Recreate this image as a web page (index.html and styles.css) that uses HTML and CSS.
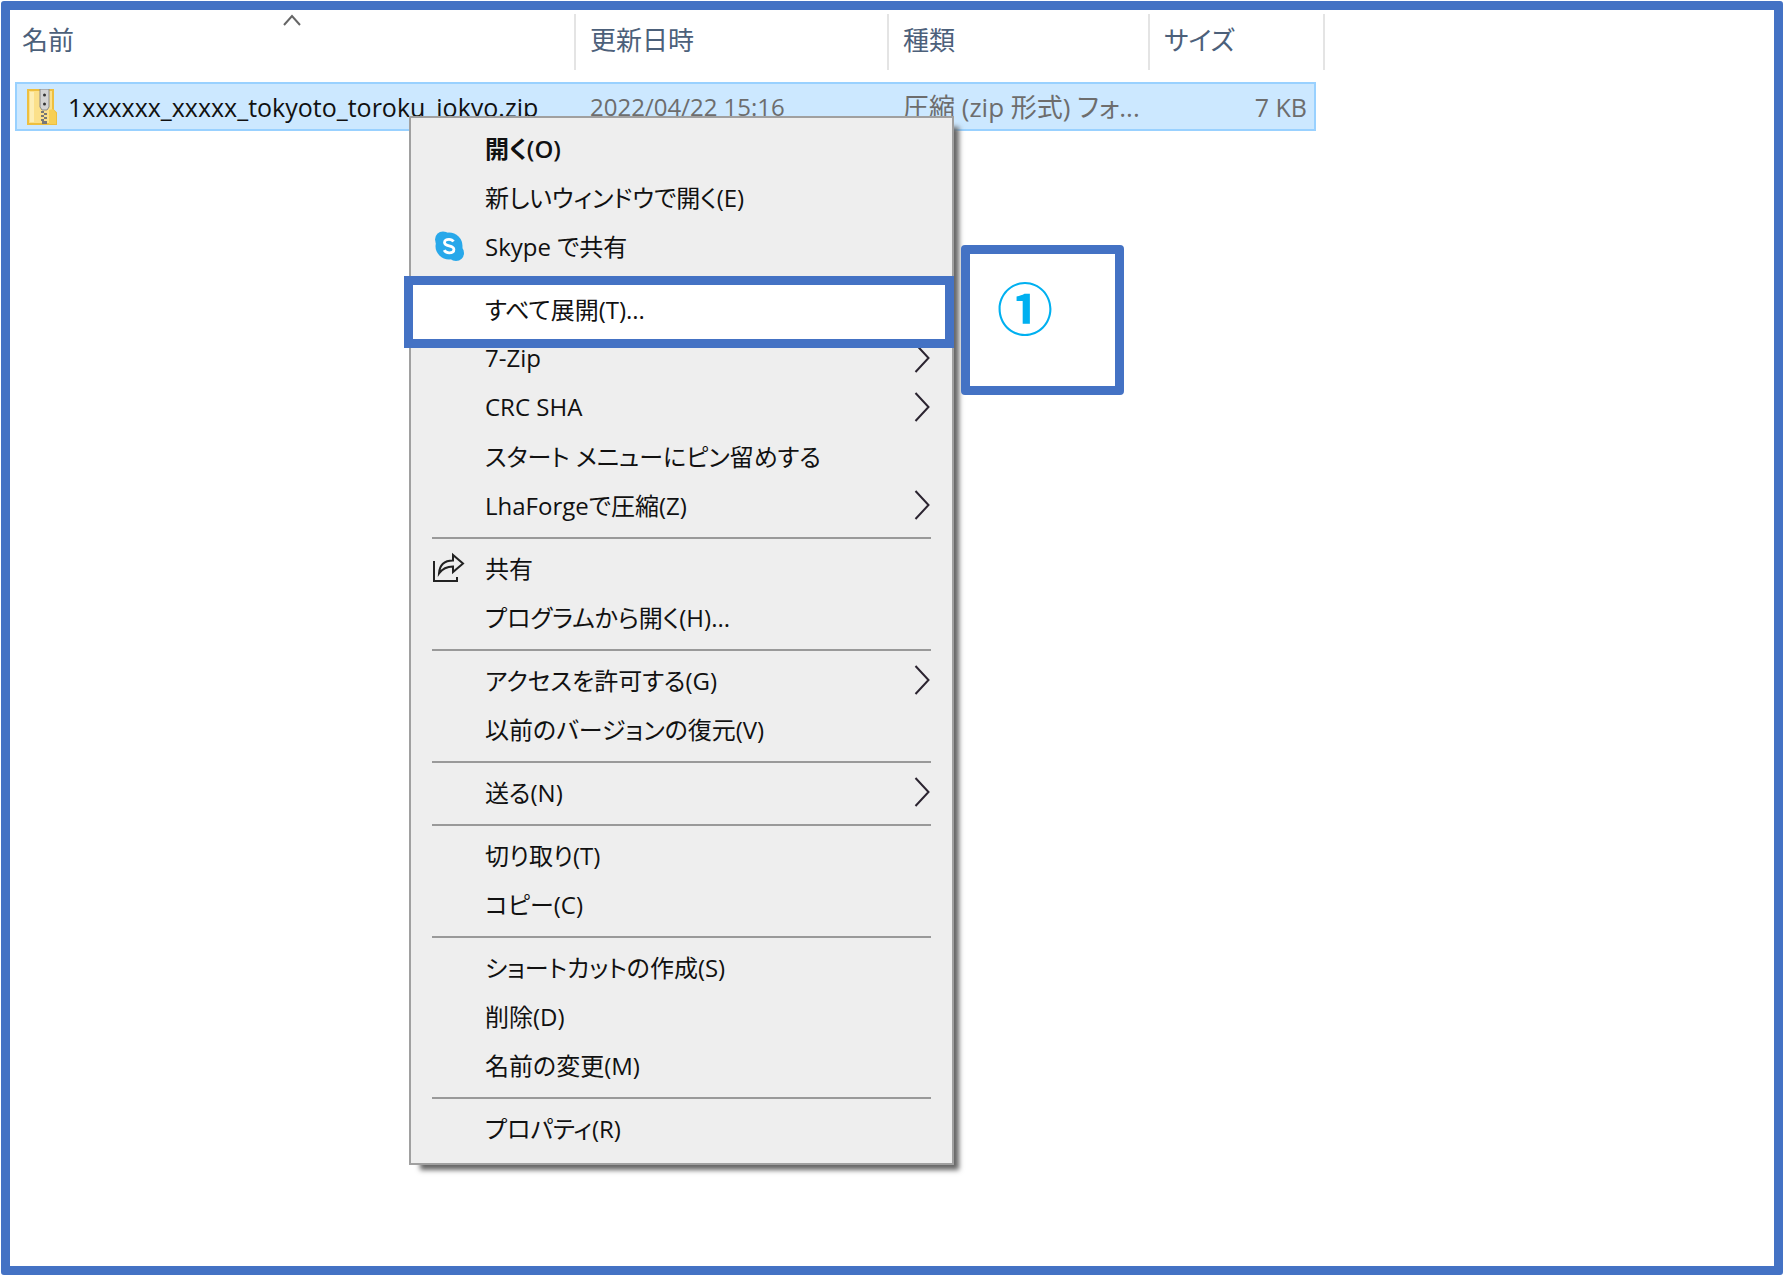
FILE: index.html
```html
<!DOCTYPE html>
<html lang="ja">
<head>
<meta charset="utf-8">
<meta name="viewport" content="width=device-width, initial-scale=1">
<title>すべて展開</title>
<link rel="stylesheet" href="styles.css">
</head>
<body>
<svg class="sprite" aria-hidden="true">
  <symbol id="arrow" viewBox="0 0 16 30"><path d="M1.500 1 14.500 15 1.500 29" fill="none" stroke="#2b2430" stroke-width="2"/></symbol>
</svg>
<main class="frame">
  <table class="files">
    <colgroup><col class="col-name"><col class="col-date"><col class="col-type"><col class="col-size"></colgroup>
    <thead>
      <tr>
        <th scope="col" aria-sort="ascending">名前
          <svg class="sort" viewBox="0 0 18 12" aria-hidden="true"><path d="M1 11 9 2l8 9" fill="none" stroke="#666" stroke-width="2"/></svg>
        </th>
        <th scope="col">更新日時</th>
        <th scope="col">種類</th>
        <th scope="col">サイズ</th>
      </tr>
    </thead>
    <tbody>
      <tr>
        <td>
          <div class="file">
            <svg class="zip" viewBox="0 0 30 36" aria-hidden="true">
              <path d="M1 1h25v20l3 3v11H1z" fill="#fbe08a" stroke="#eebf3f" stroke-width="2"/>
              <path d="M3 3h4v30H3z" fill="#fdeeb5"/>
              <path d="M22 21l4-1 3 4v11h-7z" fill="#f7cf55"/>
              <path d="M13 0h9v18l-2 3h-5l-2-3z" fill="#d3d3d3" stroke="#888" stroke-width="1"/>
              <circle cx="17.500" cy="6" r="1.500" fill="#333"/><circle cx="17.500" cy="15" r="1.500" fill="#333"/>
              <path d="M14 22h3v2h3v2h-3v2h3v2h-3v2h3v3h-5v-3h-1v-2h3v-2h-3v-2h3v-2h-3z" fill="#777"/>
            </svg>
            <span>1xxxxxx_xxxxx_tokyoto_toroku_jokyo.zip</span>
          </div>
        </td>
        <td>2022/04/22 15:16</td>
        <td class="type">圧縮 (zip 形式) フォ...</td>
        <td class="size">7 KB</td>
      </tr>
    </tbody>
  </table>

  <ul class="menu" role="menu">
    <li><button class="item default" role="menuitem"><span class="label">開く(O)</span></button></li>
    <li><button class="item" role="menuitem"><span class="label">新しいウィンドウで開く(E)</span></button></li>
    <li><button class="item" role="menuitem">
      <svg class="icon" viewBox="0 0 32 32" aria-hidden="true"><g fill="#28a8ea"><circle cx="16" cy="16" r="13.500"/><circle cx="10" cy="9.500" r="8"/><circle cx="23" cy="23" r="8"/></g><path d="M20.500 11.500c-1-1.700-2.600-2.200-4.500-2.200-2.700 0-4.500 1.200-4.500 3.200 0 4.600 9.400 2.300 9.400 7 0 2.100-2 3.300-4.700 3.300-2.200 0-4.100-.7-5-2.600" fill="none" stroke="#fff" stroke-width="2.800"/></svg>
      <span class="label">Skype で共有</span></button></li>
    <li role="separator"></li>
    <li><button class="item marked" role="menuitem"><span class="label">すべて展開(T)...</span></button></li>
    <li><button class="item" role="menuitem"><span class="label">7-Zip</span><svg class="arrow"><use href="#arrow"/></svg></button></li>
    <li><button class="item" role="menuitem"><span class="label">CRC SHA</span><svg class="arrow"><use href="#arrow"/></svg></button></li>
    <li><button class="item" role="menuitem"><span class="label">スタート メニューにピン留めする</span></button></li>
    <li><button class="item" role="menuitem"><span class="label">LhaForgeで圧縮(Z)</span><svg class="arrow"><use href="#arrow"/></svg></button></li>
    <li role="separator"></li>
    <li><button class="item" role="menuitem">
      <svg class="icon" viewBox="0 0 32 32" aria-hidden="true"><g fill="none" stroke="#222" stroke-width="2"><path d="M1 9v20h23v-4"/><path d="M6 21.500c.5-8 5-13 14-13V3l10 8.500-10 8.500v-5.500c-6 0-10.500 2-14 7z"/></g></svg>
      <span class="label">共有</span></button></li>
    <li><button class="item" role="menuitem"><span class="label">プログラムから開く(H)...</span></button></li>
    <li role="separator"></li>
    <li><button class="item" role="menuitem"><span class="label">アクセスを許可する(G)</span><svg class="arrow"><use href="#arrow"/></svg></button></li>
    <li><button class="item" role="menuitem"><span class="label">以前のバージョンの復元(V)</span></button></li>
    <li role="separator"></li>
    <li><button class="item" role="menuitem"><span class="label">送る(N)</span><svg class="arrow"><use href="#arrow"/></svg></button></li>
    <li role="separator"></li>
    <li><button class="item" role="menuitem"><span class="label">切り取り(T)</span></button></li>
    <li><button class="item" role="menuitem"><span class="label">コピー(C)</span></button></li>
    <li role="separator"></li>
    <li><button class="item" role="menuitem"><span class="label">ショートカットの作成(S)</span></button></li>
    <li><button class="item" role="menuitem"><span class="label">削除(D)</span></button></li>
    <li><button class="item" role="menuitem"><span class="label">名前の変更(M)</span></button></li>
    <li role="separator"></li>
    <li><button class="item" role="menuitem"><span class="label">プロパティ(R)</span></button></li>
  </ul>

  <aside class="callout">①</aside>
</main>
</body>
</html>
```
FILE: styles.css
```css
* { box-sizing: border-box; }

body {
  margin: 0;
  background: #fff;
  color: #111;
  font-family: "Open Sans", "Noto Sans CJK JP", sans-serif;
  font-size: 24px;
  font-feature-settings: "palt";
}

.sprite { position: absolute; width: 0; height: 0; }

.frame {
  position: relative;
  min-height: calc(100vh - 1px);
  margin: 1px 0 0 1px;
  padding: 4px 5px;
  border: 9px solid #4472c4;
  border-radius: 3px;
}

/* File list */
.files {
  table-layout: fixed;
  width: 1310px;
  border-collapse: separate;
  border-spacing: 0;
}
.col-name { width: 561px; }
.col-date { width: 313px; }
.col-type { width: 261px; }
.col-size { width: 175px; }

.files th {
  position: relative;
  height: 56px;
  padding: 0 14px 4px;
  border-right: 2px solid #e4e4e4;
  color: #4c607a;
  font-size: 26px;
  font-weight: 400;
  line-height: 36px;
  text-align: left;
}
.files th:first-child { padding-left: 7px; }

.sort {
  position: absolute;
  top: 0;
  left: 50%;
  width: 18px;
  height: 12px;
  margin-left: -12px;
}

.files thead::after {
  content: "";
  display: block;
  height: 12px;
}

/* The selection bar spans every cell and stops short of the last divider */
.files tbody tr { position: relative; isolation: isolate; }
.files td:first-child::before {
  content: "";
  position: absolute;
  z-index: -1;
  inset: 0 9px 0 0;
  border: 2px solid #99d1ff;
  background: #cce8ff;
}
.files td {
  height: 49px;
  padding: 0 14px;
  color: #6d6d6d;
  line-height: 32px;
  white-space: nowrap;
}
.files td:first-child { padding-left: 12px; color: #111; font-size: 25px; }
.files .type { font-size: 26px; }
.files .size { padding-right: 18px; font-size: 25px; text-align: right; }

.file { display: flex; align-items: center; gap: 11px; }
.zip { width: 30px; height: 36px; }

/* Context menu */
.menu {
  position: absolute;
  top: 106px;
  left: 399px;
  width: 545px;
  margin: 0;
  padding: 6px 0 10px;
  border: 2px solid #a0a0a0;
  background: #eee;
  box-shadow: 8px 8px 5px -3px #666;
  list-style: none;
}
.menu [role="separator"] {
  height: 14px;
  margin: 0 21px;
  padding: 7px 0 5px;
  background: #999 content-box;
}

.item {
  display: flex;
  align-items: center;
  position: relative;
  width: 100%;
  height: 49px;
  padding: 0 22px 2px 74px;
  border: 0;
  background: none;
  color: inherit;
  font: inherit;
  text-align: left;
  white-space: nowrap;
}
.label { flex: 1; }
.icon {
  width: 32px;
  height: 32px;
  margin: 0 20px 0 -52px;
}
.arrow { width: 16px; height: 30px; }
.default { font-weight: 600; }

/* Marked step in the instructions */
.marked { z-index: 1; isolation: isolate; }
.marked::before {
  content: "";
  position: absolute;
  z-index: -1;
  inset: -9px -2px -14px -7px;
  border: 9px solid #4472c4;
  background: #fff;
}
.callout {
  position: absolute;
  top: 235px;
  left: 951px;
  width: 163px;
  height: 150px;
  padding: 24px 27px;
  border: 9px solid #4472c4;
  border-radius: 4px;
  background: #fff;
  color: #00b0f0;
  font-family: "Noto Sans CJK JP", sans-serif;
  font-size: 56px;
  font-weight: 700;
  line-height: 56px;
}
```
